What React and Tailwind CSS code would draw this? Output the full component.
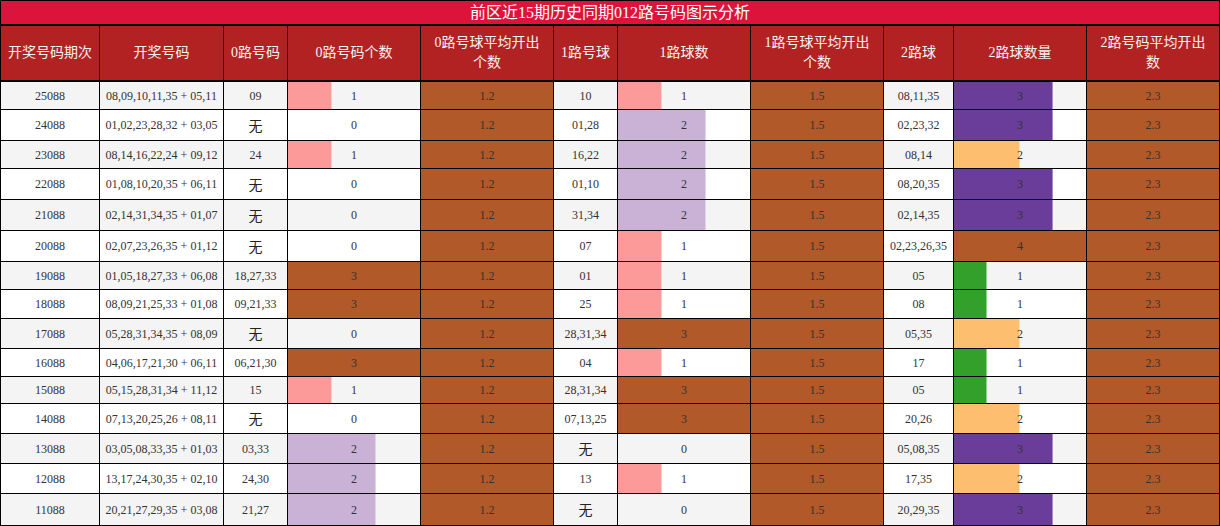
import React from "react";

const rows = [
  ["25088", "08,09,10,11,35 + 05,11", "09", 1, "10", 1, "08,11,35", 3, 28],
  ["24088", "01,02,23,28,32 + 03,05", "无", 0, "01,28", 2, "02,23,32", 3, 31],
  ["23088", "08,14,16,22,24 + 09,12", "24", 1, "16,22", 2, "08,14", 2, 28],
  ["22088", "01,08,10,20,35 + 06,11", "无", 0, "01,10", 2, "08,20,35", 3, 31],
  ["21088", "02,14,31,34,35 + 01,07", "无", 0, "31,34", 2, "02,14,35", 3, 31],
  ["20088", "02,07,23,26,35 + 01,12", "无", 0, "07", 1, "02,23,26,35", 4, 31],
  ["19088", "01,05,18,27,33 + 06,08", "18,27,33", 3, "01", 1, "05", 1, 28],
  ["18088", "08,09,21,25,33 + 01,08", "09,21,33", 3, "25", 1, "08", 1, 29],
  ["17088", "05,28,31,34,35 + 08,09", "无", 0, "28,31,34", 3, "05,35", 2, 30],
  ["16088", "04,06,17,21,30 + 06,11", "06,21,30", 3, "04", 1, "17", 1, 28],
  ["15088", "05,15,28,31,34 + 11,12", "15", 1, "28,31,34", 3, "05", 1, 27],
  ["14088", "07,13,20,25,26 + 08,11", "无", 0, "07,13,25", 3, "20,26", 2, 30],
  ["13088", "03,05,08,33,35 + 01,03", "03,33", 2, "无", 0, "05,08,35", 3, 30],
  ["12088", "13,17,24,30,35 + 02,10", "24,30", 2, "13", 1, "17,35", 2, 30],
  ["11088", "20,21,27,29,35 + 03,08", "21,27", 2, "无", 0, "20,29,35", 3, 32],
];

// bar colours for the 0/1 route columns (max 3) and the 2 route column (max 4)
const barsA = {
  1: "bg-[#fb9a99] border-r border-[#fcd0cf]",
  2: "bg-[#cab2d6] border-r border-[#e2d5e9]",
};
const barsB = {
  1: "bg-[#33a02c] border-r border-[#8fd08a]",
  2: "bg-[#fdbf6f] border-r border-[#fedcaf]",
  3: "bg-[#6a3d9a] border-r border-[#a98bcb]",
};

const font = { fontFamily: '"Liberation Serif", "Noto Sans CJK SC", serif' };

const Cell = ({ w, className = "", children }) => (
  <div className={`${w} h-full shrink-0 relative flex items-center justify-center border-r border-black text-center ${className}`}>
    {children}
  </div>
);

const Value = ({ v }) =>
  v === "无" ? (
    <span className="text-[14px] text-[#222]" style={{ fontFamily: '"Noto Sans CJK SC", sans-serif' }}>无</span>
  ) : (
    <span>{v}</span>
  );

const Count = ({ w, v, max, bars }) => {
  if (v === max) {
    return <Cell w={w} className="bg-[#b15928]"><span className="relative">{v}</span></Cell>;
  }
  return (
    <Cell w={w}>
      {v > 0 && (
        <div className={`absolute left-0 top-0 bottom-0 ${bars[v]}`} style={{ width: `${(v / max) * 100}%` }} />
      )}
      <span className="relative">{v}</span>
    </Cell>
  );
};

const Avg = ({ w, v }) => <Cell w={w} className="bg-[#b15928]">{v}</Cell>;

const headers = [
  ["w-[99px]", "开奖号码期次"],
  ["w-[124px]", "开奖号码"],
  ["w-[64px]", "0路号码"],
  ["w-[133px]", "0路号码个数"],
  ["w-[133px]", <>0路号球平均开出<br />个数</>],
  ["w-[64px]", "1路号球"],
  ["w-[133px]", "1路球数"],
  ["w-[133px]", <>1路号球平均开出<br />个数</>],
  ["w-[70px]", "2路球"],
  ["w-[133px]", "2路球数量"],
  ["w-[133px]", <>2路号码平均开出<br />数</>],
];

export default function App() {
  return (
    <div className="w-[1220px] h-[526px] bg-white overflow-hidden" style={font}>
      {/* Title */}
      <div className="h-[26px] bg-[#dc143c] border border-black border-b-2 flex items-center justify-center text-white text-[16px] leading-none">
        前区近15期历史同期012路号码图示分析
      </div>

      {/* Header */}
      <div className="h-[56px] flex bg-[#b22222] border-l border-b-2 border-black text-[#f3f3f3] text-[14px] leading-[20px]">
        {headers.map(([w, label], i) => (
          <Cell key={i} w={w}>{label}</Cell>
        ))}
      </div>

      {/* Rows */}
      {rows.map((r, i) => (
        <div
          key={r[0]}
          className={`flex border-l border-b border-black text-[12px] text-[#333] ${i % 2 === 0 ? "bg-[#f4f4f4]" : "bg-white"}`}
          style={{ height: r[8] }}
        >
          <Cell w="w-[99px]">{r[0]}</Cell>
          <Cell w="w-[124px]">{r[1]}</Cell>
          <Cell w="w-[64px]"><Value v={r[2]} /></Cell>
          <Count w="w-[133px]" v={r[3]} max={3} bars={barsA} />
          <Avg w="w-[133px]" v="1.2" />
          <Cell w="w-[64px]"><Value v={r[4]} /></Cell>
          <Count w="w-[133px]" v={r[5]} max={3} bars={barsA} />
          <Avg w="w-[133px]" v="1.5" />
          <Cell w="w-[70px]"><Value v={r[6]} /></Cell>
          <Count w="w-[133px]" v={r[7]} max={4} bars={barsB} />
          <Avg w="w-[133px]" v="2.3" />
        </div>
      ))}
    </div>
  );
}
